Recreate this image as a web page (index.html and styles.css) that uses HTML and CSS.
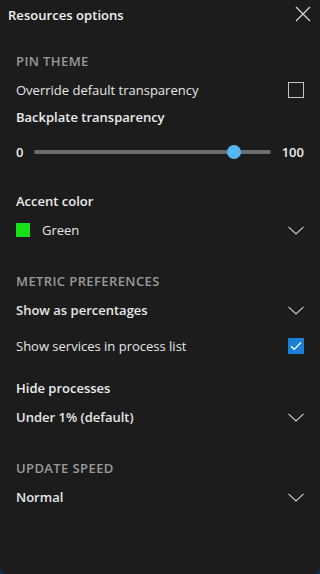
FILE: index.html
```
<!DOCTYPE html>
<html lang="en">
<head>
    <meta charset="UTF-8">
    <meta name="viewport" content="width=device-width, initial-scale=1.0">
    <title>Resources options</title>
    <link rel="stylesheet" href="styles.css">
</head>
<body>
    <div class="panel">
        <div class="panel-header">
            <h1>Resources options</h1>
            <button class="close-btn" aria-label="Close">
                <svg width="16" height="16" viewBox="0 0 16 16">
                    <path d="M1 1 L15 15 M15 1 L1 15" stroke="#d8d8d8" stroke-width="1.2" fill="none"/>
                </svg>
            </button>
        </div>

        <div class="panel-body">
            <!-- Pin theme -->
            <div class="section-title first">PIN THEME</div>
            <div class="row">
                <span class="label">Override default transparency</span>
                <span class="checkbox"></span>
            </div>
            <div class="field-title tight">Backplate transparency</div>
            <div class="slider-row">
                <span class="slider-value">0</span>
                <div class="slider">
                    <div class="slider-track"></div>
                    <div class="slider-thumb" style="left: 84.5%"></div>
                </div>
                <span class="slider-value">100</span>
            </div>
            <div class="field-title spaced">Accent color</div>
            <div class="row">
                <span class="label with-swatch"><span class="swatch"></span>Green</span>
                <svg class="chevron" width="16" height="9" viewBox="0 0 16 9">
                    <path d="M0.5 0.8 L8 8 L15.5 0.8" stroke="#d0d0d0" stroke-width="1.1" fill="none"/>
                </svg>
            </div>

            <!-- Metric preferences -->
            <div class="section-title">METRIC PREFERENCES</div>
            <div class="row">
                <span class="label strong">Show as percentages</span>
                <svg class="chevron" width="16" height="9" viewBox="0 0 16 9">
                    <path d="M0.5 0.8 L8 8 L15.5 0.8" stroke="#d0d0d0" stroke-width="1.1" fill="none"/>
                </svg>
            </div>
            <div class="row gap-6">
                <span class="label">Show services in process list</span>
                <span class="checkbox checked">
                    <svg width="12" height="10" viewBox="0 0 12 10">
                        <path d="M1 5.2 L4.2 8.3 L11 1.5" stroke="#fff" stroke-width="1.2" fill="none"/>
                    </svg>
                </span>
            </div>
            <div class="field-title gap-17">Hide processes</div>
            <div class="row">
                <span class="label strong">Under 1% (default)</span>
                <svg class="chevron" width="16" height="9" viewBox="0 0 16 9">
                    <path d="M0.5 0.8 L8 8 L15.5 0.8" stroke="#d0d0d0" stroke-width="1.1" fill="none"/>
                </svg>
            </div>

            <!-- Update speed -->
            <div class="section-title">UPDATE SPEED</div>
            <div class="row">
                <span class="label strong">Normal</span>
                <svg class="chevron" width="16" height="9" viewBox="0 0 16 9">
                    <path d="M0.5 0.8 L8 8 L15.5 0.8" stroke="#d0d0d0" stroke-width="1.1" fill="none"/>
                </svg>
            </div>
        </div>
    </div>
</body>
</html>
```

FILE: styles.css
```
* {
    margin: 0;
    padding: 0;
    box-sizing: border-box;
}

body {
    background: #0e2f4d;
    font-family: 'Open Sans', 'Noto Sans', sans-serif;
    color: #e8e8e8;
    width: 320px;
    height: 574px;
    overflow: hidden;
}

.panel {
    width: 320px;
    height: 574px;
    background: #1c1c1c;
    border-radius: 0 0 7px 7px;
}

.panel-header {
    height: 30px;
    display: flex;
    align-items: center;
    justify-content: space-between;
    padding: 0 8px 0 8px;
}

h1 {
    font-size: 13px;
    font-weight: 600;
    color: #f2f2f2;
    letter-spacing: 0.05px;
}

.close-btn {
    background: none;
    border: none;
    width: 16px;
    height: 16px;
    display: flex;
    margin-right: 1px;
    margin-top: -2px;
}

.panel-body {
    padding: 0 16px;
}

.section-title {
    height: 20px;
    line-height: 20px;
    font-size: 13px;
    font-weight: 600;
    color: #9a9a9a;
    margin-top: 26px;
    letter-spacing: 0.4px;
}

.section-title.first {
    margin-top: 21px;
}

.row {
    height: 30px;
    display: flex;
    align-items: center;
    justify-content: space-between;
    margin-top: 4px;
}

.label {
    font-size: 13px;
    color: #e6e6e6;
}

.label.strong {
    font-weight: 600;
}

.with-swatch {
    display: flex;
    align-items: center;
}

.swatch {
    width: 14px;
    height: 14px;
    background: #16e016;
    margin-right: 12px;
}

.field-title {
    height: 20px;
    line-height: 20px;
    font-size: 13px;
    font-weight: 600;
    color: #ececec;
}

.field-title.tight {
    margin-top: 2px;
}

.field-title.spaced {
    margin-top: 24px;
}

.gap-6 {
    margin-top: 6px;
}

.field-title.gap-17 {
    margin-top: 17px;
}

.checkbox {
    width: 16px;
    height: 16px;
    border: 1.5px solid #c4c4c4;
    display: flex;
    align-items: center;
    justify-content: center;
}

.checkbox.checked {
    background: #1a7fd6;
    border-color: #1a7fd6;
}

.chevron {
    margin-right: 0;
}

.slider-row {
    height: 30px;
    margin-top: 10px;
    display: flex;
    align-items: center;
    gap: 11px;
}

.slider-value {
    font-size: 13px;
    font-weight: 600;
    color: #ececec;
}

.slider {
    flex: 1;
    position: relative;
    height: 14px;
    display: flex;
    align-items: center;
}

.slider-track {
    width: 100%;
    height: 4px;
    border-radius: 2px;
    background: #6c6c6c;
}

.slider-thumb {
    position: absolute;
    top: 0;
    width: 14px;
    height: 14px;
    margin-left: -7px;
    border-radius: 50%;
    background: #56b6f2;
}
```
